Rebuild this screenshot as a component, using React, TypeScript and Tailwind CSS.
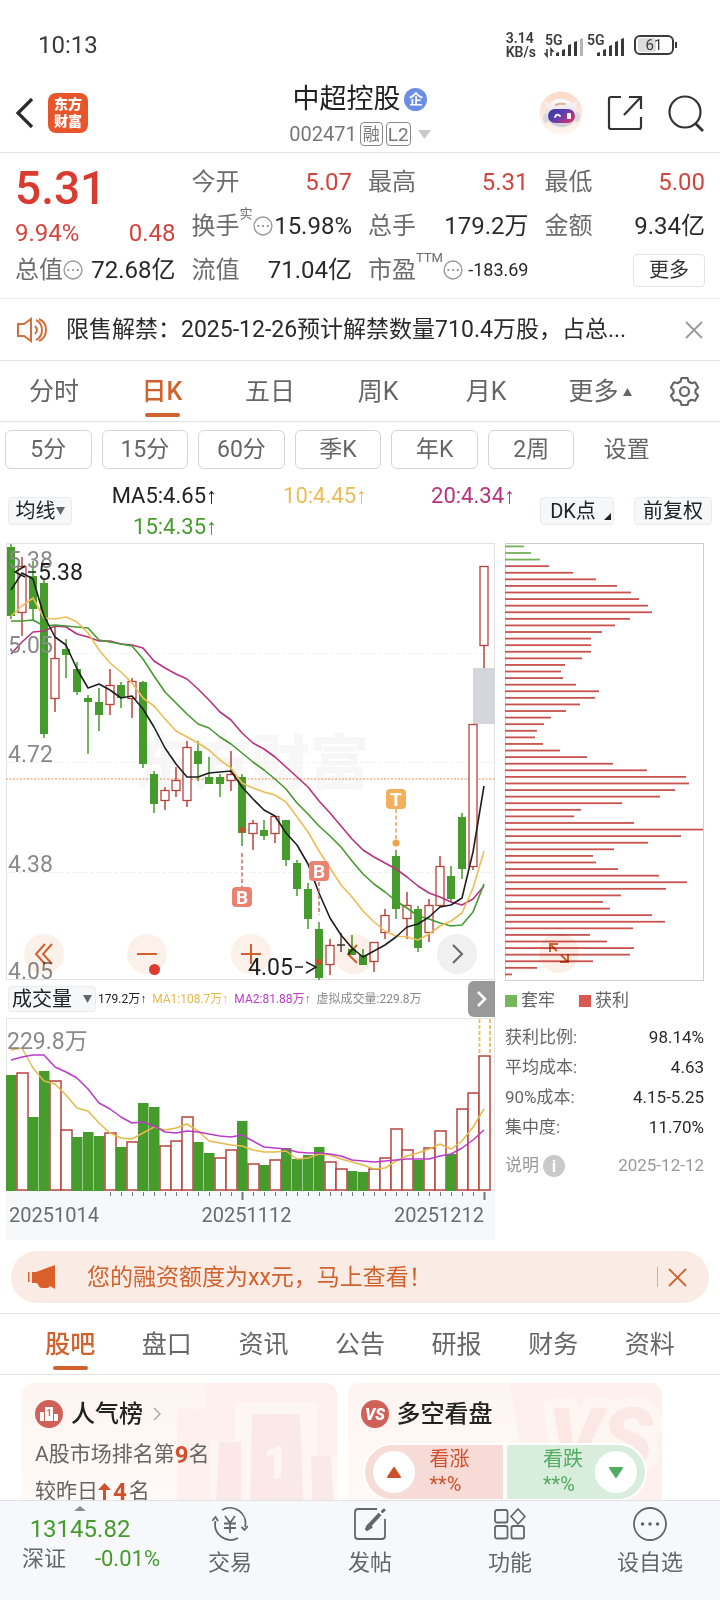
import type { ReactNode } from "react";

// [high, bodyTop, bodyBottom, low, rising] in chart units, one candle per 11 units
const CANDLES: [number, number, number, number, number][] = [
  [1, 4, 73, 76, 0], [14, 23, 70, 93, 1], [18, 33, 66, 77, 0], [37, 40, 191, 195, 0],
  [83, 115, 156, 169, 1], [96, 106, 112, 135, 0], [119, 126, 149, 152, 0], [152, 155, 159, 211, 0],
  [145, 159, 172, 188, 0], [126, 142, 162, 172, 1], [139, 142, 155, 165, 0], [135, 138, 156, 175, 1],
  [138, 139, 221, 225, 0], [228, 231, 261, 270, 0], [244, 247, 258, 267, 1], [224, 237, 248, 254, 1],
  [198, 204, 258, 264, 1], [198, 208, 221, 238, 0], [214, 234, 241, 241, 0], [231, 234, 241, 254, 0],
  [208, 231, 238, 248, 1], [231, 234, 290, 303, 0], [277, 280, 291, 307, 1], [277, 287, 293, 297, 0],
  [273, 273, 291, 300, 1], [277, 277, 317, 323, 0], [317, 320, 346, 353, 0], [340, 346, 376, 386, 0],
  [379, 386, 435, 437, 0], [396, 402, 422, 432, 1], [390, 402, 403, 409, 2], [392, 406, 412, 412, 0],
  [406, 412, 422, 422, 0], [399, 399, 419, 429, 1], [366, 372, 390, 396, 1], [307, 313, 366, 376, 0],
  [349, 362, 376, 396, 1], [363, 366, 405, 409, 0], [356, 362, 390, 399, 1], [313, 323, 363, 364, 1],
  [323, 333, 356, 359, 0], [270, 274, 326, 336, 0], [181, 181, 324, 327, 1], [23, 23, 103, 125, 1],
];

const MA5 = [47, 30, 36, 73, 94, 102, 126, 145, 141, 147, 155, 153, 166, 184, 205, 221, 234, 234, 230, 229, 228, 244, 256, 267, 273, 290, 302, 321, 350, 375, 392, 405, 414, 408, 402, 394, 384, 381, 374, 364, 362, 355, 309, 243];
const MA10 = [73, 63, 55, 75, 76, 74, 79, 90, 107, 120, 129, 140, 155, 163, 176, 188, 194, 200, 207, 217, 225, 240, 245, 249, 252, 259, 274, 289, 308, 325, 342, 354, 368, 379, 388, 393, 394, 397, 391, 383, 378, 370, 345, 308];
const MA15 = [78, 78, 77, 83, 82, 83, 84, 85, 97, 99, 101, 103, 116, 133, 149, 160, 171, 181, 185, 194, 201, 210, 219, 227, 236, 246, 260, 271, 283, 293, 304, 318, 331, 341, 349, 358, 365, 373, 376, 380, 383, 382, 369, 341];
const MA20 = [111, 99, 89, 88, 83, 84, 91, 94, 98, 98, 101, 102, 105, 118, 125, 131, 136, 146, 157, 169, 177, 190, 200, 206, 214, 224, 234, 244, 258, 270, 283, 296, 307, 314, 320, 326, 334, 343, 350, 354, 359, 362, 356, 343];

const VOLUME = [58, 55, 100, 54, 63, 112, 120, 115, 119, 115, 130, 124, 86, 90, 128, 123, 99, 125, 136, 140, 132, 104, 146, 148, 142, 131, 142, 138, 130, 144, 151, 154, 155, 151, 140, 111, 132, 143, 130, 113, 137, 91, 75, 38];
const VOLUME_UP = [1, 4, 5, 9, 11, 14, 15, 16, 19, 20, 22, 24, 29, 30, 33, 34, 35, 36, 38, 39, 41, 42, 43];
const VMA1 = [32, 30, 50, 63, 66, 77, 90, 93, 105, 115, 120, 121, 115, 109, 112, 110, 106, 113, 123, 125, 127, 128, 132, 134, 134, 133, 141, 140, 136, 137, 141, 144, 147, 151, 150, 143, 138, 135, 131, 126, 131, 123, 109, 91];
const VMA2 = [42, 39, 37, 37, 49, 54, 60, 71, 85, 91, 99, 105, 104, 108, 114, 115, 113, 114, 116, 118, 119, 117, 123, 129, 130, 131, 134, 135, 135, 136, 138, 142, 143, 144, 143, 142, 141, 141, 141, 138, 136, 130, 122, 112];

const CHIPS = [19, 26, 35, 44, 68, 91, 112, 126, 134, 143, 147, 125, 110, 97, 86, 86, 86, 77, 60, 56, 58, 71, 94, 90, 75, 61, 46, 39, 32, 30, 38, 55, 82, 108, 142, 181, 184, 170, 155, 117, 76, 69, 129, 198, 176, 143, 109, 88, 91, 113, 154, 182, 161, 116, 98, 105, 147, 160, 128, 85, 102, 129, 125, 88, 32, 7];

const GREEN = "#459b2c";
const RED = "#b8433d";

const cx = (i: number) => 5 + i * 11;
const line = (ys: number[]) => ys.map((y, i) => `${cx(i)},${y}`).join(" ");

function StatusBar() {
  return (
    <div className="flex h-[78px] items-center justify-between pl-[38px] pr-[42px] pt-3 text-[#3a3a3a]">
      <span className="text-2xl">10:13</span>
      <div className="flex items-center">
        <div className="text-sm font-semibold leading-[14px]">
          <div>3.14</div>
          <div>KB/s</div>
        </div>
        <svg className="ml-2 h-[28px] w-[84px]" viewBox="0 -3 84 28" fill="#3a3a3a">
          <text x="1" y="11" fontSize="14" fontWeight="600">5G</text>
          <path d="M3 15v7l-2.500-3M7 22v-7l2.500 3" stroke="#3a3a3a" strokeWidth="1.600" fill="none" />
          <path d="M12 22v-3l3-1v4zM18 22v-6l3-1v7zM24 11l3-1v12h-3zM30 8l3-1v15h-3z" />
          <path d="M36 5l3-1v18h-3z" fill="#b5b5b5" />
          <text x="43" y="11" fontSize="14" fontWeight="600">5G</text>
          <path d="M53 22v-3l3-1v4zM59 22v-6l3-1v7zM65 12l3-1v11h-3zM71 8l3-1v15h-3zM77 5l3-1v18h-3z" />
        </svg>
        <svg className="ml-1.5 h-[20px] w-[44px]" viewBox="0 0 44 20" fill="none">
          <rect x="4" y="3" width="18" height="14" rx="2" fill="#dcdcdc" />
          <rect x="1" y="1" width="38" height="18" rx="5" stroke="#3a3a3a" strokeWidth="2" />
          <path d="M42 7v6" stroke="#3a3a3a" strokeWidth="2" />
          <text x="20" y="15" fontSize="15" textAnchor="middle" fill="#3a3a3a">61</text>
        </svg>
      </div>
    </div>
  );
}

function Robot() {
  return (
    <svg className="size-[44px]" viewBox="0 0 44 44">
      <defs>
        <linearGradient id="face" x1="0" y1="0" x2="1" y2="0.7">
          <stop offset="0" stopColor="#3a35a0" />
          <stop offset="0.5" stopColor="#5a3fb0" />
          <stop offset="1" stopColor="#d2356f" />
        </linearGradient>
        <linearGradient id="halo" x1="0" y1="0" x2="0" y2="1">
          <stop offset="0" stopColor="#fbd9c8" />
          <stop offset="1" stopColor="#fef6f2" />
        </linearGradient>
        <linearGradient id="shell" x1="0" y1="0" x2="0" y2="1">
          <stop offset="0" stopColor="#fbfafc" />
          <stop offset="1" stopColor="#cfccd8" />
        </linearGradient>
      </defs>
      <circle cx="22" cy="22" r="21.500" fill="url(#halo)" />
      <path d="M6 9q0 8 4 9l5-5Q8 13 6 9zM38 9q0 8-4 9l-5-5q7 0 9-4z" fill="#f3f1f6" />
      <ellipse cx="7" cy="27" rx="3" ry="5" fill="#d9d7e0" />
      <ellipse cx="38" cy="26" rx="3" ry="5" fill="#d9d7e0" />
      <path d="M22 8c9 0 14 6 15 15 0 8-6 13-14 13S8 32 7 23C8 14 13 8 22 8z" fill="url(#shell)" />
      <path d="M17 14q4-2 9-1" stroke="#dcb48c" strokeWidth="2" strokeLinecap="round" fill="none" />
      <rect x="9" y="18" width="27" height="14" rx="7" fill="url(#face)" />
      <path d="M16 26q2-4 5-1" stroke="#fff" strokeWidth="1.800" fill="none" strokeLinecap="round" />
      <rect x="28" y="22" width="4" height="6" rx="1" fill="#fff" />
    </svg>
  );
}

function Header() {
  return (
    <header className="grid h-[75px] grid-cols-[1fr_auto_1fr] items-start border-b border-[#e3e3e3] pt-0.5">
      <div className="flex h-[66px] items-center gap-[14px] pl-[15px]">
        <button aria-label="返回">
          <svg className="h-[34px] w-[19px]" viewBox="0 0 19 34" fill="none" stroke="#2b2b2b" strokeWidth="3.200">
            <path d="M17 3L3 17l14 14" />
          </svg>
        </button>
        <a href="#home" className="flex size-10 flex-col items-center justify-center rounded-lg bg-[#e8552b] text-[14px] font-black leading-[17px] text-white">
          <span>东方</span>
          <span>财富</span>
        </a>
      </div>
      <div className="flex flex-col items-center">
        <h1 className="flex h-[38px] items-center gap-1 text-[27px] text-[#222]">
          中超控股
          <span className="flex size-[23px] items-center justify-center rounded-full bg-[#6b8de3] text-[14px] font-bold leading-none text-white">企</span>
        </h1>
        <div className="flex h-8 items-center gap-[3px] text-xl text-[#777]">
          002471
          <span className="flex h-6 w-[23px] items-center justify-center rounded border border-[#888] text-[17px] leading-none">融</span>
          <span className="flex h-6 w-[25px] items-center justify-center rounded border border-[#888] text-[19px] leading-none">L2</span>
          <svg className="ml-1 h-[9px] w-[13px]" viewBox="0 0 13 9" fill="#c9c9c9"><path d="M0 0h13L6.500 9z" /></svg>
        </div>
      </div>
      <div className="flex h-[66px] items-center justify-end gap-6 pr-4">
        <button aria-label="助手"><Robot /></button>
        <button aria-label="分享">
          <svg className="size-[36px]" viewBox="0 0 36 36" fill="none" stroke="#333" strokeWidth="2.200">
            <path d="M14 2H4Q2 2 2 4v28q0 2 2 2h28q2 0 2-2V22M17 20L33 3M22 2h12v12" />
          </svg>
        </button>
        <button aria-label="搜索">
          <svg className="size-[37px]" viewBox="0 0 37 37" fill="none" stroke="#333" strokeWidth="2.200">
            <circle cx="18" cy="17" r="15.500" />
            <path d="M28 28l8 8" strokeWidth="2.800" />
          </svg>
        </button>
      </div>
    </header>
  );
}

function InfoDot() {
  return (
    <svg className="size-[20px] shrink-0" viewBox="0 0 19 19" fill="none">
      <circle cx="9.500" cy="9.500" r="8.500" stroke="#9a9a9a" strokeWidth="1.300" />
      <path d="M5 9.500h.1M9.500 9.500h.1M14 9.500h.1" stroke="#8a8a8a" strokeWidth="2" strokeLinecap="round" />
    </svg>
  );
}

function Stat({ label, sup, dot, value, tone = "text-[#2a2a2a]" }: { label: string; sup?: string; dot?: boolean; value: string; tone?: string }) {
  return (
    <div className="flex h-11 items-center whitespace-nowrap">
      <span className="text-[#6c6c6c]">{label}</span>
      {sup && <span className="self-start text-[13px] leading-5 text-[#6c6c6c]">{sup}</span>}
      {dot && <InfoDot />}
      <span className={`ml-auto ${tone}`}>{value}</span>
    </div>
  );
}

function Quote() {
  const red = "text-[#d2453f]";
  return (
    <section className="grid grid-cols-4 gap-x-4 border-b border-[#ededed] pb-1.5 pl-[15px] pr-[15px] pt-[7px] text-2xl">
      <div>
        <div className="flex h-[58px] items-center text-[46px] font-medium text-[#d93b31]">5.31</div>
        <div className={`flex h-[30px] items-center justify-between ${red}`}>
          <span>9.94%</span>
          <span>0.48</span>
        </div>
        <Stat label="总值" dot value="72.68亿" />
      </div>
      <div>
        <Stat label="今开" value="5.07" tone={red} />
        <Stat label="换手" sup="实" dot value="15.98%" />
        <Stat label="流值" value="71.04亿" />
      </div>
      <div>
        <Stat label="最高" value="5.31" tone={red} />
        <Stat label="总手" value="179.2万" />
        <Stat label="市盈" sup="TTM" dot value="-183.69" tone="text-[#2a2a2a] text-lg" />
      </div>
      <div>
        <Stat label="最低" value="5.00" tone={red} />
        <Stat label="金额" value="9.34亿" />
        <div className="flex h-11 items-center justify-end">
          <button className="h-[33px] w-[72px] rounded border border-[#e4e4e4] text-xl leading-none text-[#333]">更多</button>
        </div>
      </div>
    </section>
  );
}

function Notice() {
  return (
    <div className="flex h-[62px] items-center border-b border-[#e3e3e3] pl-4 pr-[17px]">
      <svg className="h-[26px] w-[32px] shrink-0" viewBox="0 0 32 26" fill="none" stroke="#d0703f" strokeWidth="2">
        <path d="M2 7h6l7-5v22l-7-5H2zM19 9q4 4 0 8M20 3q6 3 6 10t-6 10M23 2q7 3 7 11t-7 11" />
      </svg>
      <p className="ml-[18px] truncate pt-0.5 text-[23px] text-[#2a2a2a]">限售解禁：2025-12-26预计解禁数量710.4万股，占总...</p>
      <button aria-label="关闭" className="ml-auto">
        <svg className="size-[18px]" viewBox="0 0 18 18" stroke="#999" strokeWidth="1.800"><path d="M1 1l16 16M17 1L1 17" /></svg>
      </button>
    </div>
  );
}

function PeriodTabs() {
  return (
    <nav className="grid h-[61px] grid-cols-[repeat(6,3fr)_2fr] border-b border-[#e3e3e3] text-[25px] text-[#666]">
      {["分时", "日K", "五日", "周K", "月K"].map((t) => (
        <button key={t} className={`relative flex items-center justify-center pt-0.5 ${t === "日K" ? "font-medium text-[#d2622d]" : ""}`}>
          {t}
          {t === "日K" && <span className="absolute bottom-1 h-1 w-[35px] rounded-full bg-[#d2622d]" />}
        </button>
      ))}
      <button className="flex items-center justify-center gap-1 pl-3 pt-0.5">
        更多
        <svg className="h-[8px] w-[9px]" viewBox="0 0 9 8" fill="#666"><path d="M4.500 0L9 8H0z" /></svg>
      </button>
      <button aria-label="图表设置" className="flex items-center justify-center">
        <svg className="size-[31px]" viewBox="0 0 31 31" fill="none" stroke="#666" strokeWidth="2.200" strokeLinejoin="round">
          <path d="M12.500 2h6l1 3.500 3 1.700 3.600-.9 3 5.200-2.600 2.600v2.800l2.600 2.600-3 5.200-3.600-.9-3 1.700-1 3.500h-6l-1-3.500-3-1.700-3.600.9-3-5.200 2.600-2.600v-2.800L1.900 11.500l3-5.200 3.600.9 3-1.700z" />
          <circle cx="15.500" cy="15.500" r="4.500" />
        </svg>
      </button>
    </nav>
  );
}

function SubPeriods() {
  return (
    <div className="flex gap-2.5 pl-[5px] pr-[51px] pt-2 text-[23px] text-[#666]">
      {["5分", "15分", "60分", "季K", "年K", "2周"].map((t) => (
        <button key={t} className="h-[39px] flex-1 rounded-md border border-[#d5d5d5] leading-none">{t}</button>
      ))}
      <button className="h-[39px] flex-1 leading-none">设置</button>
    </div>
  );
}

function MaRow() {
  const pill = "h-7 rounded border border-[#e9ebee] bg-[#f6f7f9] text-xl leading-none text-[#222]";
  return (
    <div className="flex h-[74px] items-center pl-2 pr-2 pt-2.5">
      <button className={`${pill} flex w-16 items-center justify-center`}>
        均线
        <svg className="h-[8px] w-[9px]" viewBox="0 0 9 8" fill="#666"><path d="M0 0h9L4.500 8z" /></svg>
      </button>
      <div className="grid grid-cols-[145px_150px_148px] text-right text-[22px] leading-[31px]">
        <span className="text-[#222]">MA5:4.65↑</span>
        <span className="text-[#ecbd57]">10:4.45↑</span>
        <span className="text-[#b8327f]">20:4.34↑</span>
        <span className="text-[#459b2c]">15:4.35↑</span>
      </div>
      <button className={`${pill} relative ml-auto w-[74px] pr-2`}>
        DK点
        <svg className="absolute bottom-1 right-0.5 size-[7px]" viewBox="0 0 7 7" fill="#222"><path d="M7 0v7H0z" /></svg>
      </button>
      <button className={`${pill} ml-5 w-[78px]`}>前复权</button>
    </div>
  );
}

function Marker({ x, y, letter, color }: { x: number; y: number; letter: string; color: string }) {
  return (
    <g>
      <rect x={x - 10} y={y - 10} width="20" height="20" rx="4" fill={color} />
      <text x={x} y={y + 7} fontSize="19" fontWeight="700" fill="#fff" textAnchor="middle">{letter}</text>
    </g>
  );
}

function RoundButton({ label, grey, children }: { label: string; grey?: boolean; children: ReactNode }) {
  return (
    <button aria-label={label} className={`flex size-10 items-center justify-center rounded-full mix-blend-multiply ${grey ? "bg-[#f0f0f0]" : "bg-[#fcf1ea]"}`}>
      <svg className="size-6" viewBox="0 0 24 24" fill="none" stroke={grey ? "#666" : "#d2622d"} strokeWidth="2">{children}</svg>
    </button>
  );
}

function PriceChart() {
  return (
    <div className="relative">
      <svg className="block w-full overflow-visible" viewBox="0 0 489 437">
        <text x="245" y="241" fontSize="59" fontWeight="900" textAnchor="middle" fill="#f7f7f8">东方财富</text>
        <rect x="0.500" y="0.500" width="488" height="436" fill="none" stroke="#e2e2e2" />
        {[110, 219, 329].map((y) => (
          <path key={y} d={`M0 ${y}.5H489`} stroke="#f1f1f1" strokeDasharray="4 2" />
        ))}
        <path d="M0 236H489" stroke="#ecb48f" strokeWidth="1.300" strokeDasharray="2 1.500" />
        <rect x="467" y="125" width="22" height="56" fill="#d5d6dc" />
        {CANDLES.map(([hi, top, bot, lo, up], i) => {
          const x = cx(i);
          if (up === 2) {
            return <path key={i} d={`M${x} ${hi}V${lo}M${x - 4} ${top}h8`} stroke="#333" strokeWidth="1.300" />;
          }
          return (
            <g key={i}>
              <path d={`M${x} ${hi}V${top}M${x} ${bot}V${lo}`} stroke={up ? RED : GREEN} strokeWidth="1.500" />
              {up ? (
                <rect x={x - 4} y={top + 0.5} width="8" height={bot - top - 1} fill="#fff" stroke={RED} strokeWidth="1.300" />
              ) : (
                <rect x={x - 4} y={top} width="8" height={bot - top} fill={GREEN} />
              )}
            </g>
          );
        })}
        <g fill="none" strokeWidth="1.600" strokeLinejoin="round">
          <polyline points={line(MA20)} stroke="#b8327f" />
          <polyline points={line(MA15)} stroke="#459b2c" />
          <polyline points={line(MA10)} stroke="#ecbd57" />
          <polyline points={line(MA5)} stroke="#1f1f1f" />
        </g>
        <g fill="none" strokeWidth="1.500" strokeDasharray="4 2.500">
          <path d="M236 310V344M313 339V372" stroke="#cf6a5c" />
          <path d="M390 266V296" stroke="#eda54b" />
        </g>
        <circle cx="236" cy="287" r="3" fill="#c0522a" />
        <circle cx="313" cy="419" r="3" fill="#c0522a" />
        <circle cx="390" cy="300" r="3.500" fill="#eda54b" />
        <Marker x={236} y={354} letter="B" color="#ea8272" />
        <Marker x={313} y={328} letter="B" color="#ea8272" />
        <Marker x={390} y={256} letter="T" color="#f2b05c" />
        <g fontSize="23" fill="#8a8a8a">
          <text x="2" y="25">5.38</text>
          <text x="2" y="110">5.05</text>
          <text x="2" y="219">4.72</text>
          <text x="2" y="329">4.38</text>
          <text x="2" y="436">4.05</text>
        </g>
        <g fontSize="23" fill="#1f1f1f">
          <text x="32" y="37">5.38</text>
          <text x="242" y="432">4.05</text>
        </g>
        <path d="M19 23l-10 6 10 5M22 29h8M289 424h8M300 419l10 5-10 6" fill="none" stroke="#1f1f1f" strokeWidth="1.600" />
      </svg>
      <div className="absolute inset-x-[18px] bottom-1.5 flex justify-between">
        <RoundButton label="最早"><path d="M13 2L4 12l9 10M20 2l-9 10 9 10" /></RoundButton>
        <div className="relative">
          <RoundButton label="缩小"><path d="M2 12h20" /></RoundButton>
          <span className="absolute -bottom-px right-[7px] size-[11px] rounded-full bg-[#dc3c30]" />
        </div>
        <RoundButton label="放大"><path d="M2 12h20M12 2v20" /></RoundButton>
        <RoundButton label="向左"><path d="M15 3L6 12l9 9" /></RoundButton>
        <RoundButton label="向右" grey><path d="M8 3l9 9-9 9" /></RoundButton>
      </div>
    </div>
  );
}

function VolumeHeader() {
  return (
    <div className="flex h-[38px] items-center gap-1.5 overflow-hidden whitespace-nowrap pl-0.5 text-xs">
      <button className="-mr-1 flex h-[26px] w-[88px] shrink-0 items-center justify-between rounded border border-[#e9ebee] bg-[#f6f7f9] px-[3px] text-xl leading-none text-[#222]">
        成交量
        <svg className="h-[8px] w-[9px]" viewBox="0 0 9 8" fill="#666"><path d="M0 0h9L4.500 8z" /></svg>
      </button>
      <span className="text-[#222]">179.2万↑</span>
      <span className="text-[#e5b94a]">MA1:108.7万↑</span>
      <span className="text-[#ba3cc8]">MA2:81.88万↑</span>
      <span className="text-[#8a8a8a]">虚拟成交量:229.8万</span>
      <button aria-label="下一指标" className="ml-auto flex h-9 w-[27px] shrink-0 items-center justify-center rounded-l-md bg-[#999]">
        <svg className="h-[16px] w-[10px]" viewBox="0 0 10 16" fill="none" stroke="#fff" strokeWidth="2.500"><path d="M1 1l7 7-7 7" /></svg>
      </button>
    </div>
  );
}

function VolumeChart() {
  return (
    <div className="bg-[#f7f8fa]">
      <svg className="block w-full" viewBox="0 0 489 182">
        <rect x="0.500" y="0.500" width="488" height="172" fill="#fff" stroke="#e6e6e6" />
        {VOLUME.map((top, i) =>
          VOLUME_UP.includes(i) ? (
            <rect key={i} x={cx(i) - 5} y={top} width="11" height={172 - top} fill="#fff" stroke={RED} strokeWidth="1.500" />
          ) : (
            <rect key={i} x={cx(i) - 5} y={top - 1} width="10.500" height={174 - top} fill={GREEN} />
          )
        )}
        <path d="M473.500 1V37M484 1V37" stroke="#ecbd57" strokeWidth="1.800" strokeDasharray="4 2" />
        <g fill="none" strokeWidth="1.500" strokeLinejoin="round">
          <polyline points={line(VMA1)} stroke="#e5b94a" />
          <polyline points={line(VMA2)} stroke="#ba3cc8" />
        </g>
        {VOLUME.map((_, i) =>
          i < 9 ? null : (
            <path key={i} d={`M${cx(i) + 0.5} 174V${i === 21 || i === 43 ? 182 : 178}`} stroke="#777" strokeWidth={i === 21 || i === 43 ? 2 : 1} />
          )
        )}
        <text x="1" y="31" fontSize="23" fill="#8a8a8a">229.8万</text>
      </svg>
      <div className="flex h-10 items-start justify-between pl-[3px] pr-[11px] text-xl leading-[30px] text-[#6b6b6b]">
        <span>20251014</span>
        <span>20251112</span>
        <span>20251212</span>
      </div>
    </div>
  );
}

function ChipChart() {
  return (
    <div className="relative">
      <svg className="block w-full" viewBox="0 0 199 438">
        <rect x="0.500" y="0.500" width="198" height="437" fill="#fff" stroke="#cfcfcf" />
        {CHIPS.map((w, i) => (
          <rect key={i} x="0" y={2.5 + i * 6.585} width={w} height="1.800" fill={i < 3 ? "#74b05a" : "#c9524d"} />
        ))}
      </svg>
      <button aria-label="展开" className="absolute bottom-2 left-[34px] flex size-10 items-center justify-center rounded-full bg-[#fbefe8] mix-blend-multiply">
        <svg className="size-5" viewBox="0 0 20 20" fill="none" stroke="#d2622d" strokeWidth="2">
          <path d="M1 9V1h8M1 1l7 7M19 11v8h-8M19 19l-7-7" />
        </svg>
      </button>
    </div>
  );
}

function ChipInfo() {
  const rows = [
    ["获利比例:", "98.14%"],
    ["平均成本:", "4.63"],
    ["90%成本:", "4.15-5.25"],
    ["集中度:", "11.70%"],
  ];
  return (
    <div className="text-[17px] text-[#666]">
      <div className="flex h-[42px] items-center pb-0.5">
        <span className="mr-1 size-3 bg-[#77b75c]" />套牢
        <span className="ml-6 mr-1 size-3 bg-[#d85852]" />获利
      </div>
      <dl>
        {rows.map(([k, v]) => (
          <div key={k} className="flex h-[30px] items-center justify-between">
            <dt>{k}</dt>
            <dd className="text-[#2a2a2a]">{v}</dd>
          </div>
        ))}
      </dl>
      <div className="mt-2 flex h-[30px] items-center text-[#999]">
        说明
        <span className="ml-1 flex size-[22px] items-center justify-center rounded-full bg-[#c9c9c9] font-bold leading-none text-white">i</span>
        <span className="ml-auto">2025-12-12</span>
      </div>
    </div>
  );
}

function Banner() {
  return (
    <div className="mx-[11px] mt-[11px] flex h-[52px] items-center rounded-full bg-[#faece4] pl-[17px] pr-[22px] text-[#d2622d]">
      <svg className="h-[26px] w-[28px]" viewBox="0 0 28 26" fill="#d95f2b">
        <path d="M0 8h1.500v10H0zM4 8h4L27 1v24l-5-3q-1 2-3 2h-5q-3 0-4-4l-2-1H4z" />
      </svg>
      <a href="#margin" className="ml-[31px] pt-0.5 text-[23px]">您的融资额度为xx元，马上查看！</a>
      <span className="ml-auto h-5 w-px bg-[#e3a98c]" />
      <button aria-label="关闭" className="ml-2.5">
        <svg className="size-[19px]" viewBox="0 0 19 19" stroke="#d2622d" strokeWidth="1.800"><path d="M1 1l17 17M18 1L1 18" /></svg>
      </button>
    </div>
  );
}

function SectionTabs() {
  return (
    <nav className="mt-2.5 flex h-[62px] border-y border-[#e3e3e3] px-[22px] text-[25px] text-[#666]">
      {["股吧", "盘口", "资讯", "公告", "研报", "财务", "资料"].map((t, i) => (
        <button key={t} className={`relative flex flex-1 items-center justify-center pt-0.5 ${i === 0 ? "font-medium text-[#d2622d]" : ""}`}>
          {t}
          {i === 0 && <span className="absolute bottom-1 h-1 w-[35px] rounded-full bg-[#d2622d]" />}
        </button>
      ))}
    </nav>
  );
}

function RankCard() {
  return (
    <article className="relative h-[140px] flex-1 overflow-hidden rounded-xl bg-gradient-to-b from-[#fef5f1] to-[#fffaf8] px-[13px] pt-3">
      <svg className="absolute right-0 top-0 h-[140px] w-[160px]" viewBox="0 0 160 140">
        <path d="M28 0h132v140H0V26h28z" fill="#fdf0ed" />
        <path d="M58 19h82v54h20v67H33V58h25z" fill="#fef6f3" />
        <path d="M75 31h48l4 109H73zM42 59h22v81H38zM134 73h20l4 67h-22z" fill="#fbe9e7" />
        <text x="99" y="95" fontSize="44" fontWeight="900" textAnchor="middle" fill="#fef6f3">1</text>
      </svg>
      <h2 className="relative flex h-[38px] items-center text-2xl font-medium text-[#222]">
        <svg className="mr-2 size-[28px]" viewBox="0 0 28 28">
          <circle cx="14" cy="14" r="14" fill="#cf6159" />
          <path d="M10 7h8v14h-8zM5 12h4v9H5zM19 14h4v7h-4z" fill="#fff" />
          <text x="14" y="16" fontSize="9" fontWeight="700" textAnchor="middle" fill="#cf6159">1</text>
        </svg>
        人气榜
        <svg className="ml-2.5 h-[14px] w-[8px]" viewBox="0 0 8 14" fill="none" stroke="#aaa" strokeWidth="1.500"><path d="M1 1l6 6-6 6" /></svg>
      </h2>
      <p className="relative mt-[3px] flex h-[37px] items-center text-[21px] text-[#666]">
        A股市场排名第<b className="text-2xl text-[#d0502c]">9</b>名
      </p>
      <p className="relative flex h-[37px] items-center text-[21px] text-[#666]">
        较昨日
        <svg className="h-[17px] w-[13px]" viewBox="0 0 13 17" fill="#d0502c"><path d="M6.500 0L13 7H8v10H5V7H0z" /></svg>
        <b className="mx-0.5 text-2xl text-[#d0502c]">4</b>名
      </p>
    </article>
  );
}

function VoteCard() {
  return (
    <article className="relative h-[140px] flex-1 overflow-hidden rounded-xl bg-gradient-to-b from-[#fef5f1] to-[#fffaf8] px-[13px] pt-3">
      <svg className="absolute right-0 top-0 h-[140px] w-[160px]" viewBox="0 0 160 140">
        <path d="M8 0h152v140H30z" fill="#fdf0ed" />
        <text x="46" y="84" fontSize="84" fontWeight="900" fontStyle="italic" fill="#fbe7e4" stroke="#fef6f3" strokeWidth="20" strokeLinejoin="round" paintOrder="stroke">VS</text>
      </svg>
      <h2 className="relative flex h-[38px] items-center text-2xl font-medium text-[#222]">
        <svg className="mr-2 size-[28px]" viewBox="0 0 28 28">
          <circle cx="14" cy="14" r="14" fill="#cf6159" />
          <text x="14" y="20" fontSize="16" fontWeight="900" fontStyle="italic" fill="#fff" textAnchor="middle">VS</text>
        </svg>
        多空看盘
      </h2>
      <div className="relative mx-1 mt-3 flex h-[54px] gap-1 overflow-hidden rounded-full bg-white ring-2 ring-white">
        <button className="flex flex-1 items-center gap-[15px] bg-[#f7dbd7] pl-2 text-left text-[#d0502c]">
          <span className="flex size-[42px] items-center justify-center rounded-full bg-white">
            <svg className="h-[11px] w-[14px]" viewBox="0 0 14 11" fill="#d0502c" stroke="#d0502c" strokeWidth="2" strokeLinejoin="round"><path d="M7 1l6 9H1z" /></svg>
          </span>
          <span className="text-xl leading-[25px]">看涨<br />**%</span>
        </button>
        <button className="flex flex-1 items-center justify-end gap-[12px] bg-[#d9eddd] pr-2 text-left text-[#54ab62]">
          <span className="text-xl leading-[25px]">看跌<br />**%</span>
          <span className="flex size-[42px] items-center justify-center rounded-full bg-white">
            <svg className="h-[11px] w-[14px]" viewBox="0 0 14 11" fill="#54ab62" stroke="#54ab62" strokeWidth="2" strokeLinejoin="round"><path d="M7 10l6-9H1z" /></svg>
          </span>
        </button>
      </div>
    </article>
  );
}

const NAV: { label: string; icon: ReactNode }[] = [
  {
    label: "交易",
    icon: (
      <>
        <path d="M10 4A15.500 15.500 0 0 1 33 21M26 32A15.500 15.500 0 0 1 3.500 15" />
        <path d="M36 20l-3.500 4-3-3M0 15l3.500-4 2.500 4" />
        <path d="M13 10l5 7 5-7M18 17v10M12 17.500h12M12 22h12" />
      </>
    ),
  },
  {
    label: "发帖",
    icon: (
      <>
        <path d="M25 3H6Q3 3 3 6v24q0 3 3 3h24q3 0 3-3V13" />
        <path d="M15 22L28 8" strokeWidth="4" />
        <path d="M17 19l-3 5 5-3M30.500 5.500L32 4" strokeWidth="3" strokeLinecap="round" />
      </>
    ),
  },
  {
    label: "功能",
    icon: (
      <>
        <rect x="3" y="4" width="12.500" height="12.500" rx="2" />
        <rect x="3" y="20" width="12.500" height="12.500" rx="2" />
        <rect x="19.500" y="20" width="12.500" height="12.500" rx="2" />
        <path d="M26 3l7 7.500-7 7.500-7-7.500z" strokeLinejoin="round" />
      </>
    ),
  },
  {
    label: "设自选",
    icon: (
      <>
        <circle cx="18" cy="18" r="16" />
        <path d="M10.500 18h.1M18 18h.1M25.500 18h.1" strokeWidth="3.500" strokeLinecap="round" />
      </>
    ),
  },
];

function BottomBar() {
  return (
    <footer className="flex h-[100px] shrink-0 border-t border-[#e0e2e5] bg-[#f6f8fb] text-[22px] text-[#666]">
      <a href="#index" className="flex w-[160px] flex-col items-center pt-[5px] text-[#459b2c]">
        <svg className="h-[5px] w-[12px]" viewBox="0 0 12 5" fill="#8a8a8a"><path d="M6 0l6 5H0z" /></svg>
        <span className="mt-0.5 text-2xl leading-8">13145.82</span>
        <span className="flex w-full justify-between pl-[22px] leading-[28px]">
          <span className="text-[#666]">深证</span>
          <span>-0.01%</span>
        </span>
      </a>
      {NAV.map(({ label, icon }) => (
        <button key={label} className="flex flex-1 flex-col items-center pt-[5px]">
          <svg className="size-[36px]" viewBox="0 0 36 36" fill="none" stroke="#666" strokeWidth="1.800">{icon}</svg>
          <span className="mt-[5px] leading-8">{label}</span>
        </button>
      ))}
    </footer>
  );
}

export default function App() {
  return (
    <div className="flex h-screen flex-col bg-white font-[Roboto,'Liberation_Sans','Noto_Sans_CJK_SC',sans-serif]">
      <main className="min-h-0 flex-1 overflow-hidden">
        <StatusBar />
        <Header />
        <Quote />
        <Notice />
        <PeriodTabs />
        <SubPeriods />
        <MaRow />
        <section className="grid grid-cols-[489fr_199fr] gap-x-2.5 pl-1.5 pr-4">
          <div>
            <PriceChart />
            <VolumeHeader />
            <VolumeChart />
          </div>
          <div>
            <ChipChart />
            <ChipInfo />
          </div>
        </section>
        <Banner />
        <SectionTabs />
        <div className="flex gap-[11px] pl-[22px] pr-[58px] pt-2">
          <RankCard />
          <VoteCard />
        </div>
      </main>
      <BottomBar />
    </div>
  );
}
